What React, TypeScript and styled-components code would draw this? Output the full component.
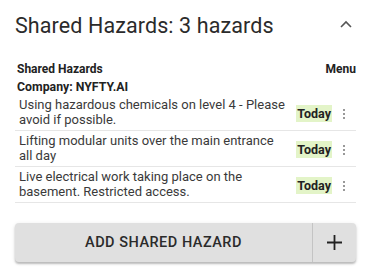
import React from "react";
import styled, { createGlobalStyle } from "styled-components";

const Global = createGlobalStyle`
  html, body { margin: 0; padding: 0; background: #fff; }
  body { font-family: Roboto, "Liberation Sans", Arial, sans-serif; color: #333; }
`;

const Panel = styled.div`
  width: 373px;
  height: 277px;
  box-sizing: border-box;
  padding: 12px 17px 0 15px;
  display: flex;
  flex-direction: column;
`;

const Header = styled.div`
  display: flex;
  align-items: center;
  justify-content: space-between;
  height: 26px;
`;

const Title = styled.h2`
  margin: 0;
  font-size: 21.5px;
  font-weight: 400;
  color: #2b2b2b;
  letter-spacing: 0.1px;
`;

const Chevron = styled.span`
  display: flex;
  margin-right: 4px;
  margin-top: -2px;
  color: #555;
`;

const TableHead = styled.div`
  margin-top: 24px;
  padding-left: 2px;
  display: flex;
  justify-content: space-between;
  font-size: 12px;
  font-weight: 700;
  color: #222;
`;

const Company = styled.div`
  padding-left: 2px;
  margin-top: 4px;
  font-size: 12.3px;
  font-weight: 700;
  color: #222;
`;

const List = styled.div`
  margin-top: 1px;
  display: flex;
  flex-direction: column;
`;

const Row = styled.div`
  display: grid;
  grid-template-columns: 1fr auto 24px;
  align-items: center;
  padding: 2px 0 3px 4px;
  border-bottom: 1.5px solid #e6e6e6;
`;

const RowText = styled.div`
  font-size: 13px;
  line-height: 15px;
  color: #3a3a3a;
  padding-right: 10px;
`;

const Badge = styled.span`
  background: #e3f4c8;
  font-size: 12.5px;
  font-weight: 700;
  color: #222;
  padding: 1px 1px;
  line-height: 15px;
  margin-top: 3px;
`;

const Kebab = styled.span`
  display: flex;
  justify-content: center;
  color: #777;
  margin-top: 3px;
`;

const ButtonGroup = styled.div`
  margin-top: 20px;
  display: flex;
  height: 39px;
  border-radius: 4px;
  background: #e0e0e0;
  box-shadow: 0 2px 2px rgba(0, 0, 0, 0.22), 0 1px 4px rgba(0, 0, 0, 0.1);
  overflow: hidden;
`;

const MainButton = styled.button`
  flex: 1;
  border: none;
  background: transparent;
  border-right: 1px solid #c4c4c4;
  font-family: Roboto, "Liberation Sans", Arial, sans-serif;
  font-size: 14.5px;
  font-weight: 500;
  letter-spacing: 0.5px;
  color: #2b2b2b;
  padding: 0;
`;

const IconButton = styled.button`
  width: 43px;
  border: none;
  background: transparent;
  display: flex;
  align-items: center;
  justify-content: center;
  color: #222;
  padding: 0;
`;

const hazards = [
  "Using hazardous chemicals on level 4 - Please avoid if possible.",
  "Lifting modular units over the main entrance all day",
  "Live electrical work taking place on the basement. Restricted access.",
];

export default function App() {
  return (
    <>
      <Global />
      <Panel>
        <Header>
          <Title>Shared Hazards: 3 hazards</Title>
          <Chevron>
            <svg width="12" height="8" viewBox="0 0 12 8">
              <path d="M1 7 L6 2 L11 7" fill="none" stroke="currentColor" strokeWidth="1.6" />
            </svg>
          </Chevron>
        </Header>
        <TableHead>
          <span>Shared Hazards</span>
          <span>Menu</span>
        </TableHead>
        <Company>Company: NYFTY.AI</Company>
        <List>
          {hazards.map((h) => (
            <Row key={h}>
              <RowText>{h}</RowText>
              <Badge>Today</Badge>
              <Kebab>
                <svg width="4" height="12" viewBox="0 0 4 12">
                  <circle cx="2" cy="2" r="1" fill="currentColor" />
                  <circle cx="2" cy="6" r="1" fill="currentColor" />
                  <circle cx="2" cy="10" r="1" fill="currentColor" />
                </svg>
              </Kebab>
            </Row>
          ))}
        </List>
        <ButtonGroup>
          <MainButton>ADD SHARED HAZARD</MainButton>
          <IconButton>
            <svg width="15" height="15" viewBox="0 0 15 15">
              <path d="M7.5 0 V15 M0 7.5 H15" stroke="currentColor" strokeWidth="1.8" />
            </svg>
          </IconButton>
        </ButtonGroup>
      </Panel>
    </>
  );
}
